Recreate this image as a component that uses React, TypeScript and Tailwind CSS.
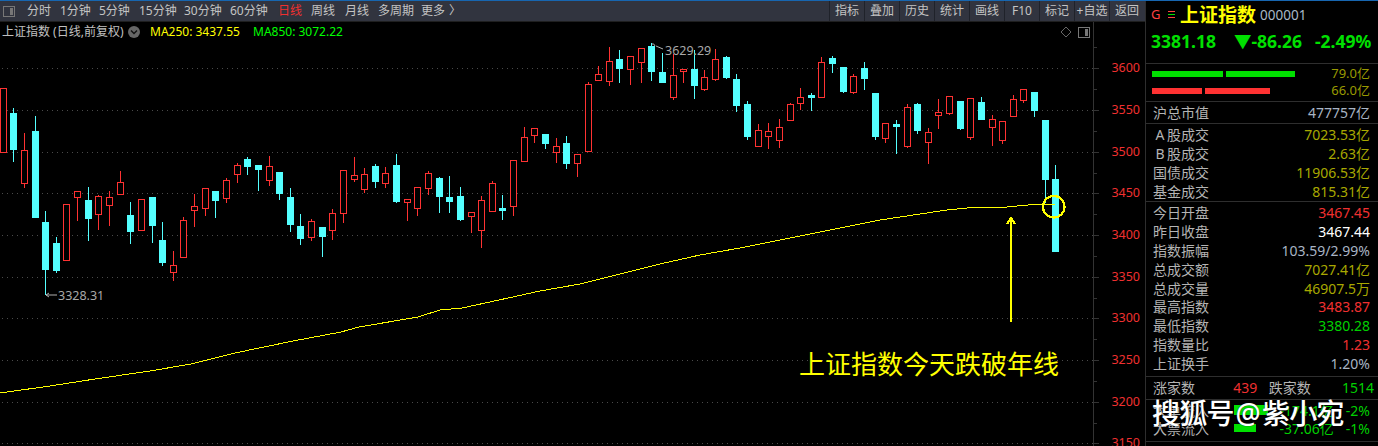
import type { ReactNode } from "react";

const SANS = "font-['Noto_Sans','Noto_Sans_CJK_SC',sans-serif]";

// [high, body top, body bottom, low, 1 = up (red outline) / 0 = down (cyan)]
const candles: number[][] = [
  [88, 88, 152, 152, 1], [108, 113, 149, 162, 0], [133, 150, 183, 188, 1], [116, 131, 217, 217, 0],
  [211, 222, 269, 295, 0], [237, 243, 270, 273, 0], [204, 204, 260, 260, 1], [191, 191, 197, 221, 1],
  [187, 200, 218, 241, 0], [195, 196, 214, 230, 1], [191, 197, 205, 226, 1], [171, 182, 194, 194, 1],
  [202, 215, 231, 244, 0], [199, 199, 230, 230, 1], [197, 197, 225, 243, 0], [222, 240, 262, 266, 0],
  [251, 265, 272, 281, 1], [217, 220, 257, 257, 1], [194, 206, 210, 227, 1], [188, 188, 208, 216, 1],
  [191, 191, 200, 218, 0], [178, 180, 198, 203, 1], [163, 165, 174, 183, 1], [157, 159, 166, 175, 0],
  [165, 165, 169, 191, 0], [156, 166, 180, 186, 1], [172, 172, 193, 200, 0], [188, 197, 224, 232, 0],
  [214, 226, 238, 245, 0], [219, 221, 237, 241, 1], [227, 227, 236, 257, 0], [209, 213, 230, 240, 1],
  [170, 170, 213, 223, 1], [157, 175, 179, 182, 1], [168, 174, 189, 193, 1], [164, 166, 181, 188, 0],
  [167, 173, 183, 188, 1], [154, 165, 201, 203, 0], [199, 199, 202, 221, 1], [187, 187, 208, 216, 1],
  [171, 173, 188, 195, 1], [177, 178, 196, 213, 0], [176, 197, 201, 213, 0], [187, 196, 219, 221, 0],
  [212, 212, 216, 233, 1], [196, 200, 230, 248, 1], [181, 183, 211, 211, 1], [195, 208, 210, 220, 0],
  [160, 160, 206, 216, 1], [127, 137, 161, 161, 1], [128, 128, 135, 143, 1], [134, 134, 143, 149, 0],
  [138, 146, 152, 163, 1], [136, 143, 163, 169, 0], [154, 154, 163, 177, 1], [82, 84, 151, 151, 1],
  [66, 74, 80, 81, 1], [47, 61, 81, 86, 1], [50, 59, 68, 83, 0], [56, 56, 69, 85, 1],
  [48, 48, 62, 83, 1], [43, 46, 71, 81, 0], [53, 72, 82, 82, 0], [54, 75, 97, 100, 1],
  [69, 69, 71, 83, 1], [50, 69, 85, 99, 0], [70, 77, 89, 91, 1], [49, 59, 79, 81, 1],
  [56, 57, 77, 79, 0], [74, 79, 105, 112, 0], [101, 104, 136, 140, 0], [124, 130, 146, 146, 1],
  [123, 131, 136, 149, 1], [119, 127, 140, 148, 1], [103, 104, 120, 121, 1], [88, 97, 103, 110, 1],
  [93, 95, 97, 111, 0], [57, 62, 97, 98, 1], [56, 58, 63, 73, 0], [67, 67, 91, 93, 0],
  [74, 76, 92, 94, 1], [62, 68, 78, 90, 0], [93, 93, 136, 140, 0], [123, 123, 138, 143, 1],
  [120, 124, 126, 154, 0], [104, 107, 146, 148, 1], [103, 104, 130, 134, 0], [128, 132, 142, 164, 1],
  [99, 112, 115, 129, 1], [96, 96, 113, 115, 1], [101, 101, 128, 130, 0], [98, 98, 137, 140, 1],
  [97, 102, 119, 120, 0], [115, 119, 127, 146, 1], [121, 121, 140, 144, 1], [95, 99, 116, 116, 1],
  [89, 89, 100, 103, 1], [92, 92, 110, 117, 0], [120, 120, 179, 203, 0], [165, 179, 251, 251, 0],
];

const MA_LINE =
  "0,393 50,386 95,379 150,371 191,364 235,353 293,341 341,332 359,327 418,317 440,310 462,308 499,300 540,291 580,284 620,274 660,264 700,255 740,248 780,240 820,232 850,226 880,220 900,217 920,214 947,210 977,207 1007,207 1028,205 1055,204";

const gridYs = [68, 110, 152, 193, 235, 277, 318, 360, 402, 443];
const axisPrices = [3600, 3550, 3500, 3450, 3400, 3350, 3300, 3250, 3200, 3150];

const leftTabs = ["分时", "1分钟", "5分钟", "15分钟", "30分钟", "60分钟", "日线", "周线", "月线", "多周期", "更多"];
const tabWidths = ["w-[23px] ml-[12px]", "w-[31px] ml-[10px]", "w-[31px] ml-[8px]", "w-[37px] ml-[9px]", "w-[38px] ml-[8px]", "w-[38px] ml-[8px]", "w-[23px] ml-[10px]", "w-[24px] ml-[10px]", "w-[24px] ml-[10px]", "w-[36px] ml-[9px]", "w-[24px] ml-[7px]"];
const rightTabs = ["指标", "叠加", "历史", "统计", "画线", "F10", "标记", "+自选", "返回"];

function Candle({ c, i }: { c: number[]; i: number }) {
  const [hi, top, bot, lo, up] = c;
  const cx = Math.round(2.7 + 10.633 * i);
  const color = up ? "#ff3232" : "#54ffff";
  return (
    <g shapeRendering="crispEdges">
      <rect x={cx} y={hi} width={1} height={lo - hi} fill={color} />
      <rect x={cx - 3} y={top} width={7} height={bot - top + 1} fill={color} />
      {up ? <rect x={cx - 2} y={top + 1} width={5} height={Math.max(bot - top - 1, 1)} fill="#000" /> : null}
    </g>
  );
}

function ChartCanvas() {
  return (
    <div className="relative h-[404px] w-[1093px]">
      <svg viewBox="0 42 1093 404" width={1093} height={404} className="block">
        {gridYs.map((y) => (
          <line key={y} x1={2} x2={1093} y1={y + 0.5} y2={y + 0.5} stroke="#4a4a4a" strokeDasharray="1 4" />
        ))}
        {candles.map((c, i) => (
          <Candle key={i} c={c} i={i} />
        ))}
        <polyline points={MA_LINE} fill="none" stroke="#ffff00" strokeWidth={1} shapeRendering="crispEdges" />
        <circle cx={1053.7} cy={206.7} r={10.8} fill="none" stroke="#ffff00" strokeWidth={2.2} shapeRendering="crispEdges" />
        <path d="M1011 322V218M1007 224L1011 218L1015 224" fill="none" stroke="#ffff00" strokeWidth={2} shapeRendering="crispEdges" />
        <path d="M652 44Q654 43 655 46M656 46L663 49" fill="none" stroke="#b0b0b0" strokeWidth={1} />
        <text x={665} y={55} fill="#a8a8a8" fontSize={12.5} fontFamily="Noto Sans">
          3629.29
        </text>
        <path d="M46 295L57 295M46 295L49 293M46 295L49 297" fill="none" stroke="#b0b0b0" strokeWidth={1} />
        <text x={58} y={300} fill="#a8a8a8" fontSize={12.5} fontFamily="Noto Sans">
          3328.31
        </text>
      </svg>
      <div className="absolute left-[799px] top-[304px] whitespace-nowrap text-[26px] leading-[36px] text-[#ffff00]">
        上证指数今天跌破年线
      </div>
    </div>
  );
}

function PriceAxis() {
  return (
    <svg viewBox="1093 22 52 424" width={52} height={424} className="block">
      <line x1={1093.5} x2={1093.5} y1={22} y2={446} stroke="#333" />
      {gridYs.map((y) => (
        <line key={y} x1={1094} x2={1099} y1={y + 0.5} y2={y + 0.5} stroke="#333" />
      ))}
      {gridYs.map((y) => (
        <line key={"m" + y} x1={1094} x2={1097} y1={y + 21.5} y2={y + 21.5} stroke="#333" />
      ))}
      <line x1={1094} x2={1097} y1={47.5} y2={47.5} stroke="#333" />
      {axisPrices.map((p, i) => (
        <text key={p} x={1140} y={gridYs[i] + 4} textAnchor="end" fill="#f03030" fontSize={12.5} fontFamily="Noto Sans">
          {p}
        </text>
      ))}
    </svg>
  );
}

function StatRow({ label, value, color, tight }: { label: ReactNode; value: string; color: string; tight?: boolean }) {
  return (
    <div className={`flex items-center justify-between pl-[7px] pr-[8px] ${tight ? "h-[18.9px]" : "h-[19px]"}`}>
      <span className="whitespace-nowrap text-[14px] text-[#b4b4b4]">{label}</span>
      <span className={`text-[14px] ${color}`}>{value}</span>
    </div>
  );
}

function SidePanel() {
  return (
    <div className="h-[445px] w-[233px] overflow-hidden border-l border-[#2e2e2e] bg-black">
      <div className="h-[63px] border-b border-[#2e2e2e]">
        <div className="flex h-[28px] items-center pl-[5px]">
          <span className="w-[17px] text-[13px] text-[#ff4040]">G</span>
          <svg width={8} height={10} className="mr-[4px]" shapeRendering="crispEdges">
            <rect y={1} width={7} height={1} fill="#ff4040" />
            <rect y={4} width={7} height={1} fill="#00e000" />
            <rect y={7} width={7} height={1} fill="#ff4040" />
          </svg>
          <span className="text-[19px] font-bold leading-none text-[#ffff00]">上证指数</span>
          <span className="ml-[4px] text-[13.5px] text-[#a8b8c8]">000001</span>
        </div>
        <div className="flex h-[24px] items-center pl-[5px] text-[17.5px] font-bold text-[#00e000]">
          <span className="w-[83px]">3381.18</span>
          <span className="w-[81px] whitespace-nowrap">▼-86.26</span>
          <span>-2.49%</span>
        </div>
      </div>
      <div className="flex h-[38px] flex-col gap-[3px] border-b border-[#2e2e2e] pl-[6px] pr-[8px] pt-[3px]">
        <div className="flex h-[14px] items-center justify-between">
          <div className="flex gap-[3px]">
            <div className="h-[6px] w-[71px] bg-[#00e000]" />
            <div className="h-[6px] w-[69px] bg-[#00e000]" />
          </div>
          <span className="text-[13px] text-[#999900]">79.0亿</span>
        </div>
        <div className="flex h-[14px] items-center justify-between">
          <div className="flex gap-[3px]">
            <div className="h-[6px] w-[50px] bg-[#ff3232]" />
            <div className="h-[6px] w-[65px] bg-[#ff3232]" />
          </div>
          <span className="text-[13px] text-[#999900]">66.0亿</span>
        </div>
      </div>
      <div className="h-[22px] border-b border-[#2e2e2e] pt-px">
        <StatRow label="沪总市值" value="477757亿" color="text-[#a8b4c4]" />
      </div>
      <div className="h-[78px] border-b border-[#2e2e2e] pt-px">
        <StatRow
          label={
            <>
              <span className="inline-block w-[14px] text-center">A</span>股成交
            </>
          }
          value="7023.53亿"
          color="text-[#a8a800]"
        />
        <StatRow
          label={
            <>
              <span className="inline-block w-[14px] text-center">B</span>股成交
            </>
          }
          value="2.63亿"
          color="text-[#a8a800]"
        />
        <StatRow label="国债成交" value="11906.53亿" color="text-[#a8a800]" />
        <StatRow label="基金成交" value="815.31亿" color="text-[#a8a800]" />
      </div>
      <div className="h-[175px] border-b border-[#2e2e2e] pt-[1px]">
        <StatRow tight label="今日开盘" value="3467.45" color="text-[#f03030]" />
        <StatRow tight label="昨日收盘" value="3467.44" color="text-white" />
        <StatRow tight label="指数振幅" value="103.59/2.99%" color="text-[#a8b4c4]" />
        <StatRow tight label="总成交额" value="7027.41亿" color="text-[#a8a800]" />
        <StatRow tight label="总成交量" value="46907.5万" color="text-[#a8a800]" />
        <StatRow tight label="最高指数" value="3483.87" color="text-[#f03030]" />
        <StatRow tight label="最低指数" value="3380.28" color="text-[#00d000]" />
        <StatRow tight label="指数量比" value="1.23" color="text-[#f03030]" />
        <StatRow tight label="上证换手" value="1.20%" color="text-[#a8b4c4]" />
      </div>
      <div className="flex h-[23px] items-center border-b border-[#2e2e2e] pb-[2px] pl-[7px] pr-[4px] text-[14px]">
        <span className="w-[81px] text-[#b4b4b4]">涨家数</span>
        <span className="w-[36px] text-[#f03030]">439</span>
        <span className="w-[74px] text-[#b4b4b4]">跌家数</span>
        <span className="text-[#00d000]">1514</span>
      </div>
      <div className="h-[42px] border-b border-[#2e2e2e] pt-px text-[14px]">
        <div className="flex h-[18px] items-center pl-[7px] pr-[8px]">
          <span className="w-[81px] text-[#b4b4b4]">大单流入</span>
          <div className="h-[10px] w-[34px] bg-[#00e000]" />
          <span className="ml-auto text-[#00d000]">-174.1亿</span>
          <span className="ml-[12px] text-[#00d000]">-2%</span>
        </div>
        <div className="flex h-[18px] items-center pl-[7px] pr-[8px]">
          <span className="w-[81px] text-[#b4b4b4]">大票流入</span>
          <div className="h-[8px] w-[22px] bg-[#00e000]" />
          <span className="ml-auto text-[#00d000]">-37.06亿</span>
          <span className="ml-[12px] text-[#00d000]">-1%</span>
        </div>
      </div>
      <div className="flex items-center pl-[7px] pr-[8px] pt-px text-[14px]">
        <span className="w-[77px] text-[#b4b4b4]">成交</span>
        <span className="text-[#00d000]">3382.22</span>
        <span className="ml-auto text-[#a8a800]">0.00</span>
      </div>
    </div>
  );
}

export default function App() {
  return (
    <div className={`relative h-[446px] w-[1378px] overflow-hidden border-t border-[#1766b0] bg-black ${SANS}`}>
      <div className="flex">
        <div className="w-[1145px]">
          <div className="flex h-[21px] items-center border-b border-[#1f1f1f] bg-[#31343f] text-[12px] leading-none text-[#c4c4c4]">
            <svg width={12} height={11} className="ml-[3px] shrink-0" shapeRendering="crispEdges">
              <rect x={0.5} y={0.5} width={11} height={10} rx={1} fill="none" stroke="#777" />
              <rect x={7} y={2} width={3} height={7} fill="#777" />
            </svg>
            {leftTabs.map((t, i) => (
              <span key={t} className={`${tabWidths[i]} shrink-0 whitespace-nowrap ${t === "日线" ? "text-[#f03030]" : ""}`}>
                {t}
              </span>
            ))}
            <span className="ml-[4px] text-[12px] text-[#c4c4c4]">〉</span>
            <div className="ml-auto flex h-full">
              {rightTabs.map((t) => (
                <div key={t} className="flex w-[35px] items-center justify-center whitespace-nowrap border-l border-[#1f222a]">
                  {t}
                </div>
              ))}
              <div className="w-px" />
            </div>
          </div>
          <div className="flex">
            <div className="w-[1093px]">
              <div className="flex h-[20px] items-center text-[12px] leading-none">
                <span className="ml-[2px] w-[126px] whitespace-nowrap text-[#c0c0c0]">上证指数 (日线,前复权)</span>
                <span className="flex h-[12px] w-[12px] items-center justify-center rounded-full bg-[#666]">
                  <svg width={8} height={6} viewBox="0 0 8 6">
                    <path d="M1 1.5L4 4.5L7 1.5" fill="none" stroke="#111" strokeWidth={1.4} />
                  </svg>
                </span>
                <span className="ml-[10px] w-[103px] whitespace-nowrap text-[#ffff00]">MA250: 3437.55</span>
                <span className="whitespace-nowrap text-[#00ff00]">MA850: 3072.22</span>
                <svg width={12} height={12} viewBox="0 0 12 12" className="ml-auto mr-[6px]">
                  <path d="M6 1L11 6L6 11L1 6Z" fill="none" stroke="#666" />
                </svg>
                <svg width={12} height={11} className="mr-[3px]" shapeRendering="crispEdges">
                  <rect x={0.5} y={0.5} width={11} height={10} rx={1} fill="none" stroke="#777" />
                  <rect x={7} y={2} width={3} height={7} fill="#777" />
                </svg>
              </div>
              <ChartCanvas />
            </div>
            <PriceAxis />
          </div>
        </div>
        <SidePanel />
      </div>
      <div className="absolute left-[1152px] top-[394px] whitespace-nowrap text-[28px] font-medium leading-[36px] tracking-[-0.8px] text-white [text-shadow:0_0_1px_#000]">
        搜狐号<span className="mx-[2px]">@</span>紫小宛
      </div>
    </div>
  );
}
